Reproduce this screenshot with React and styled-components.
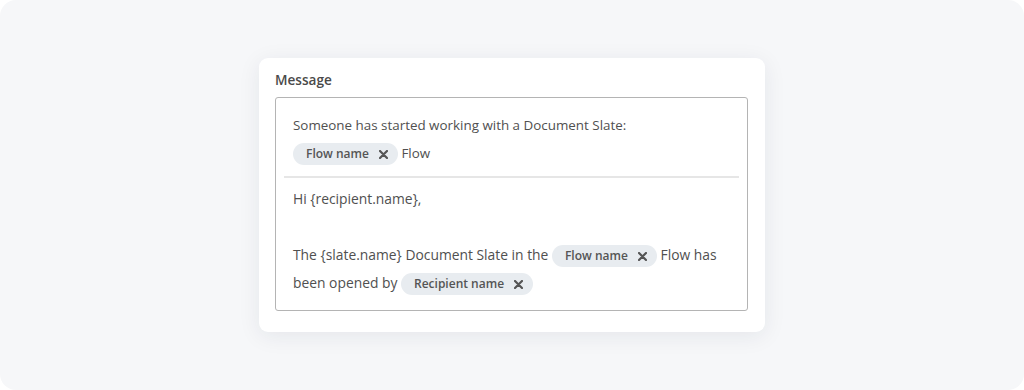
import React from "react";
import styled, { createGlobalStyle } from "styled-components";

const GlobalStyle = createGlobalStyle`
  html, body {
    margin: 0;
    padding: 0;
    background: #ffffff;
  }
  body {
    font-family: "Open Sans", "Liberation Sans", sans-serif;
  }
`;

const Page = styled.div`
  width: 1024px;
  height: 390px;
  background: #f6f7f9;
  border-radius: 16px;
  display: flex;
  align-items: center;
  justify-content: center;
`;

const Card = styled.div`
  width: 506px;
  box-sizing: border-box;
  background: #ffffff;
  border-radius: 9px;
  box-shadow: 0 4px 22px rgba(30, 40, 60, 0.08);
  padding: 13px 17px 21px 16px;
`;

const Label = styled.div`
  font-size: 13.6px;
  font-weight: 600;
  color: #4a4a4a;
  line-height: 18px;
  margin-bottom: 8px;
`;

const Box = styled.div`
  border: 1px solid #b4b4b4;
  border-radius: 3px;
  padding: 0 8px;
`;

const Section = styled.div`
  padding: ${({ $top }) => $top}px 9px ${({ $bottom }) => $bottom}px;
  font-size: ${({ $size }) => $size}px;
  line-height: 28px;
  color: #505050;
`;

const Divider = styled.div`
  height: 2px;
  background: #e6e6e6;
`;

const Chip = styled.span`
  display: inline-flex;
  align-items: center;
  gap: 10px;
  height: 22px;
  padding: 0 10px 0 13px;
  border-radius: 11px;
  background: #e8ecf0;
  font-size: 12px;
  font-weight: 600;
  color: #555555;
  vertical-align: middle;
  line-height: 22px;
`;

const Close = () => (
  <svg width="9" height="9" viewBox="0 0 9 9">
    <path
      d="M1 1 L8 8 M8 1 L1 8"
      stroke="#555555"
      strokeWidth="2.2"
      strokeLinecap="round"
    />
  </svg>
);

const Tag = ({ children }) => (
  <Chip>
    {children}
    <Close />
  </Chip>
);

const App = () => {
  return (
    <>
      <GlobalStyle />
      <Page>
        <Card>
          <Label>Message</Label>
          <Box>
            <Section $top={13} $bottom={9} $size={13.4}>
              Someone has started working with a Document Slate:
              <br />
              <Tag>Flow name</Tag> Flow
            </Section>
            <Divider />
            <Section $top={7} $bottom={13} $size={13.85}>
              Hi {"{recipient.name}"},
              <br />
              <br />
              The {"{slate.name}"} Document Slate in the <Tag>Flow name</Tag>{" "}
              Flow has been opened by <Tag>Recipient name</Tag>
            </Section>
          </Box>
        </Card>
      </Page>
    </>
  );
};

export default App;
